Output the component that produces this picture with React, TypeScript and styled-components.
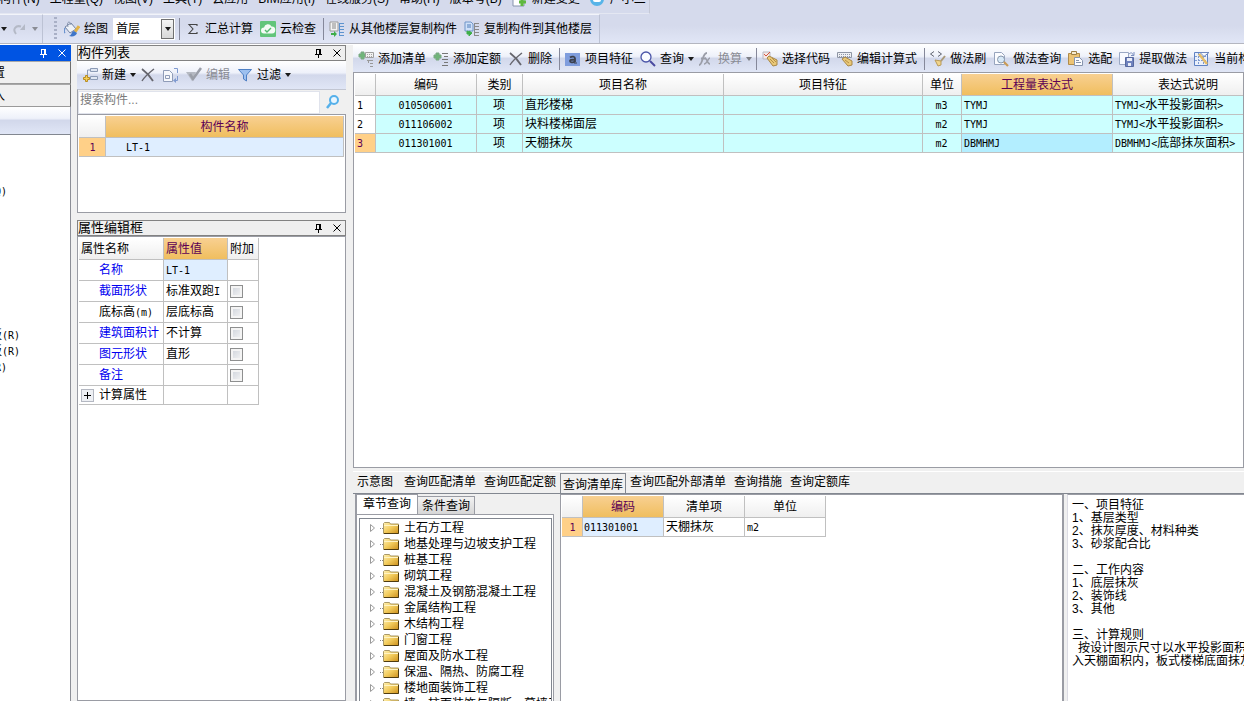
import React from 'react';
import styled, { createGlobalStyle, css } from 'styled-components';

const GlobalStyle = createGlobalStyle`
  *, *::before, *::after { box-sizing: border-box; }
  html, body { margin: 0; padding: 0; }
  body, button, input, select, th, td {
    font-family: "Liberation Sans", "Noto Sans CJK SC", sans-serif;
    font-size: 12px;
    line-height: 16px;
    color: #000;
  }
  body { overflow: hidden; background: #f0f0f0; }
  button { margin: 0; padding: 0; border: 0; background: none; white-space: nowrap; }
`;

const barGradient = css`
  background: linear-gradient(#ffffff 0%, #eef1fa 42%, #d2d8eb 50%, #e0e6f6 100%);
`;

/* ---------- window ---------- */

const Window = styled.div`
  display: flex;
  flex-direction: column;
  height: 100vh;
  background: #f0f0f0;
`;

const TopArea = styled.header`
  flex: none;
  background: linear-gradient(#d5daec 60%, #e1e6f6);
  border-bottom: 1px solid #b4b6c0;
`;

const MenuBar = styled.nav`
  display: flex;
  align-items: flex-end;
  gap: 10px;
  width: 650px;
  height: 14px;
  padding-bottom: 6px;
  overflow: hidden;
  border-right: 1px solid #c4c8d6;
  border-bottom: 1px solid #e4e7f2;
`;

const MenuItem = styled.button`
  flex: none;
  display: flex;
  gap: 4px;
  &:first-child { margin-left: -1px; }
`;

const TopToolbars = styled.div`
  display: flex;
  height: 29px;
`;

const BarGroup = styled.div`
  display: flex;
  align-items: center;
  border-right: 1px solid #bcc2d4;
  border-top: 1px solid #f2f4fa;
`;

const Grip = styled.span`
  width: 3px;
  height: 24px;
  margin: 0 7px 0 11px;
  background: repeating-linear-gradient(#a9b0c6 0 2px, transparent 2px 4px);
`;

const ToolButton = styled.button<{ $tight?: boolean }>`
  flex: none;
  display: flex;
  align-items: center;
  gap: 4px;
  padding-right: ${(p) => (p.$tight ? '4px' : '7px')};
  &:disabled { color: #8a8c94; }
`;

const Separator = styled.span`
  flex: none;
  width: 1px;
  height: 22px;
  margin-right: 5px;
  background: #85889a;
`;

const FloorPicker = styled.label`
  position: relative;
  display: block;
  width: 62px;
  height: 22px;
  margin: 0 4px 0 -2px;
  border: 1px solid #fff;
  background: #fff;
  select {
    width: 100%;
    height: 20px;
    padding: 0 18px 0 2px;
    border: 0;
    background: transparent;
    appearance: none;
  }
`;

const PickerArrow = styled.span`
  position: absolute;
  right: 0;
  top: 0;
  display: flex;
  align-items: center;
  justify-content: center;
  width: 13px;
  height: 20px;
  border: 1px solid #707070;
  background: linear-gradient(#f5f5f5, #d8d8d8);
  pointer-events: none;
`;

/* ---------- work space ---------- */

const Workspace = styled.div`
  flex: 1;
  min-height: 0;
  display: grid;
  grid-template-columns: 71px 269px minmax(0, 1fr);
  gap: 0 6px;
  border-top: 1px solid #fff;
`;

const Dock = styled.section<{ $inset?: boolean }>`
  display: flex;
  flex-direction: column;
  min-width: 0;
  min-height: 0;
  padding-left: ${(p) => (p.$inset ? '1px' : '0')};
`;

const DockTitle = styled.div<{ $active?: boolean }>`
  flex: none;
  display: flex;
  align-items: center;
  gap: 11px;
  height: 16px;
  padding-right: 4px;
  font-size: 13px;
  white-space: nowrap;
  color: ${(p) => (p.$active ? '#fff' : '#000')};
  background: ${(p) => (p.$active ? '#0054e3' : '#efefef')};
  border: 1px solid ${(p) => (p.$active ? '#0054e3' : '#828282')};
  border-left-width: ${(p) => (p.$active ? '0' : '1px')};
  button { color: inherit; display: flex; }
  span { flex: 1; }
`;

const NavButton = styled.button`
  height: 23px;
  text-align: left;
  text-indent: -7px;
  overflow: hidden;
  background: #f0f0f0;
  border-top: 1px solid #a8a8a8;
  border-right: 1px solid #6e6e6e;
  border-bottom: 1px solid #9a9a9a;
`;

const NavBar = styled.div`
  height: 27px;
  ${barGradient}
  border-right: 1px solid #a0a4b4;
`;

const NavTree = styled.ul`
  flex: 1;
  display: flex;
  flex-direction: column;
  margin: 0;
  padding: 48px 0 0;
  list-style: none;
  overflow: hidden;
  background: #fff;
  border-top: 1px solid #828790;
  border-right: 1px solid #8c8e96;
`;

const NavNode = styled.li<{ $gap?: boolean; $out: number }>`
  height: 16px;
  margin-top: ${(p) => (p.$gap ? '128px' : '0')};
  text-indent: -${(p) => p.$out}px;
  white-space: nowrap;
`;

const Mono = styled.span`
  font-family: "DejaVu Sans Mono", monospace;
  font-size: 10px;
`;

const ToolStrip = styled.div<{ $h: number; $left: number }>`
  flex: none;
  display: flex;
  align-items: center;
  height: ${(p) => p.$h}px;
  padding-left: ${(p) => p.$left}px;
  overflow: hidden;
  ${barGradient}
`;

const SearchRow = styled.form`
  flex: none;
  display: flex;
  align-items: center;
  height: 25px;
  border-left: 1px solid #a0a2aa;
  border-top: 1px solid #c2c6d2;
  input {
    flex: 1;
    min-width: 0;
    height: 23px;
    padding: 0 1px 4px;
    border: 1px solid #e0e3ec;
    background: #fff;
    outline: 0;
  }
  input::placeholder { color: #7b7b7b; opacity: 1; }
  button { display: flex; padding: 0 5px; }
`;

const Pane = styled.div<{ $h?: number; $gap?: number }>`
  flex: ${(p) => (p.$h ? 'none' : '1')};
  min-height: 0;
  height: ${(p) => (p.$h ? p.$h + 'px' : 'auto')};
  margin-bottom: ${(p) => p.$gap || 0}px;
  padding: 1px;
  overflow: hidden;
  background: #fff;
  border: 1px solid #9a9ca4;
`;

/* ---------- tables ---------- */

const Grid = styled.table<{ $w?: string }>`
  table-layout: fixed;
  width: ${(p) => p.$w || '100%'};
  border-spacing: 0;
  border-collapse: separate;
`;

const Head = styled.th<{ $hot?: boolean; $left?: boolean }>`
  height: 22px;
  padding: 0 2px;
  font-weight: normal;
  text-align: ${(p) => (p.$left ? 'left' : 'center')};
  white-space: nowrap;
  color: ${(p) => (p.$hot ? '#5c0055' : '#000')};
  background: ${(p) => (p.$hot ? 'linear-gradient(#f8d092, #f0be5e)' : 'linear-gradient(#ffffff, #efefef)')};
  border-right: 1px solid #c0c0c0;
  border-bottom: 1px solid #c0c0c0;
`;

const tones = {
  plain: '#ffffff',
  aqua: '#ccffff',
  picked: '#b3eeff',
  soft: '#dfeeff',
  marker: '#ffd088',
};

const Cell = styled.td<{ $tone?: keyof typeof tones; $center?: boolean; $h?: number; $indent?: number; $blue?: boolean }>`
  height: ${(p) => p.$h || 19}px;
  padding: 0 1px 0 ${(p) => p.$indent ?? 2}px;
  line-height: 16px;
  overflow: hidden;
  white-space: nowrap;
  text-align: ${(p) => (p.$center ? 'center' : 'left')};
  color: ${(p) => (p.$blue ? '#0000f0' : p.$tone === 'marker' ? '#5c0055' : '#000')};
  background: ${(p) => tones[p.$tone || 'plain']};
  border-right: 1px solid #c0c0c0;
  border-bottom: 1px solid #c0c0c0;
`;

const Tick = styled.input`
  display: block;
  width: 13px;
  height: 13px;
  margin: 0;
  appearance: none;
  border: 1px solid #8e8f8f;
  background: linear-gradient(135deg, #cdd2da, #f6f6f6);
  box-shadow: inset 0 0 0 2px #f4f4f4;
`;

const Expander = styled.button`
  display: inline-flex;
  align-items: center;
  justify-content: center;
  width: 13px;
  height: 13px;
  margin: 0 5px 0 2px;
  vertical-align: middle;
  border: 1px solid #b4b8c2;
  background: #eef0f4;
`;

/* ---------- query area ---------- */

const QueryTabs = styled.div`
  flex: none;
  display: flex;
  height: 23px;
  margin-top: 3px;
  border-top: 1px solid #fff;
  border-bottom: 1px solid #828790;
`;

const QueryTab = styled.button<{ $on?: boolean }>`
  flex: none;
  height: ${(p) => (p.$on ? '20px' : '19px')};
  margin-top: ${(p) => (p.$on ? '1px' : '0')};
  padding: ${(p) => (p.$on ? '2px 2px 0' : '1px 4px 0')};
  border: ${(p) => (p.$on ? '1px solid #828790' : '0')};
  border-bottom: 0;
  &:first-child { min-width: 47px; padding-right: 7px; }
`;

const QueryBody = styled.div`
  flex: none;
  display: grid;
  grid-template-columns: 207px minmax(0, 1fr) 180px;
  height: 207px;
`;

const ChapterBox = styled.div`
  display: flex;
  flex-direction: column;
  min-height: 0;
  margin-left: 2px;
`;

const ChapterTabs = styled.div`
  flex: none;
  display: flex;
  align-items: flex-end;
  height: 20px;
`;

const ChapterTab = styled.button<{ $on?: boolean }>`
  height: ${(p) => (p.$on ? '20px' : '18px')};
  width: ${(p) => (p.$on ? '63px' : '57px')};
  padding-bottom: ${(p) => (p.$on ? '2px' : '0')};
  border: 1px solid #9a9ca4;
  border-left-width: ${(p) => (p.$on ? '2px' : '0')};
  border-bottom: 0;
  background: ${(p) => (p.$on ? '#fff' : 'linear-gradient(#f2f2f2, #d6d6d6)')};
`;

const ChapterPane = styled.div`
  flex: 1;
  min-height: 0;
  display: flex;
  margin-right: 6px;
  padding: 3px 1px 0 2px;
  background: #fff;
  border: 1px solid #9a9ca4;
  border-left-width: 2px;
  border-bottom: 0;
`;

const Tree = styled.ul`
  flex: 1;
  min-width: 0;
  margin: 0;
  padding: 1px 0 0 10px;
  overflow: hidden;
  list-style: none;
  border: 1px solid #828790;
  border-bottom: 0;
`;

const TreeNode = styled.li`
  display: flex;
  align-items: center;
  height: 16px;
  white-space: nowrap;
  svg { flex: none; margin-right: 5px; }
`;

const ResultPane = styled.div`
  min-width: 0;
  overflow: hidden;
  padding: 1px 1px 0;
  background: #fff;
  border: 1px solid #9a9ca4;
  border-right-width: 2px;
  border-bottom: 0;
`;

const NotePane = styled.div`
  margin-left: 3px;
  padding: 4px 0 0 4px;
  overflow: hidden;
  white-space: pre;
  line-height: 13px;
  background: #fff;
  border-top: 1px solid #9a9ca4;
  border-left: 1px solid #dcdce4;
`;

const NoteLine = styled.p<{ $indent?: boolean }>`
  margin: 0;
  min-height: 13px;
  padding-left: ${(p) => (p.$indent ? '6px' : '0')};
`;

/* ---------- icons ---------- */

const Svg = ({ children, w = 16, h = 16 }: { children: React.ReactNode; w?: number; h?: number }) => (
  <svg width={w} height={h} viewBox={`0 0 ${w} ${h}`} fill="none" aria-hidden="true">{children}</svg>
);

const Caret = ({ color = '#1a1a1a' }: { color?: string }) => (
  <Svg w={6} h={4}><path d="M0 0h6L3 4z" fill={color} /></Svg>
);

const icons: Record<string, React.ReactNode> = {
  redo: <><path d="M4 13C0 8 4 4 9 5.500" stroke="#b4b9c6" strokeWidth="2" /><path d="M8 9l5 0V3z" fill="#b4b9c6" /></>,
  bucket: <>
    <path d="M1 6l6-4 5 6-6 4z" fill="#eef2f8" stroke="#7484a4" />
    <path d="M4 6C2 1 6-1 7 4" stroke="#8794ae" />
    <path d="M1 7c-1 2-1 4 0 5" stroke="#6b93cf" strokeWidth="1.500" />
    <path d="M15 5l-4 6" stroke="#e3b347" strokeWidth="3" />
    <path d="M10 10l3 2c-1 3-4 4-8 3 3-1 2-4 5-5z" fill="#3f76c8" />
  </>,
  sigma: <path d="M12 5V3.500H4L8 8l-4 4.500h8V11" stroke="#444" strokeWidth="1.100" />,
  cloud: <>
    <rect width="16" height="16" rx="1" fill="#62c57a" />
    <path d="M4 12.500a3 3 0 010-6 4 4 0 017.500-1A3.500 3.500 0 0112 12.500z" fill="#f4fbf5" />
    <path d="M5 9l2 2 4-4" stroke="#54b96e" strokeWidth="1.400" />
  </>,
  copyFrom: <>
    <path d="M1 1h8v9H1z" fill="#f4f4f4" stroke="#9a9a9a" />
    <path d="M3 3h4M3 5h4M3 7h4" stroke="#888" />
    <path d="M11 2.500h4M11 5.500h4M11 8.500h4M11 11.500h4M11 14.500h4M10.500 2v13" stroke="#5d93cf" />
    <path d="M2 12h3v-2l3 3-3 3v-2H2z" fill="#3fae49" />
  </>,
  copyTo: <>
    <path d="M1 1h6l2 2v7H1z" fill="#cfe0f8" stroke="#6f95c8" />
    <path d="M3 4h4M3 6h4" stroke="#4e7cb8" />
    <path d="M11 2.500h4M11 5.500h4M11 8.500h4M11 11.500h4M11 14.500h4M10.500 2v13" stroke="#8a8a8a" />
    <path d="M3 10v3h2v2l3-3-3-2v1z" fill="#3fae49" stroke="#3fae49" />
  </>,
  add: <>
    <path d="M8.500 1.500h7v3h-7zM8.500 9.500h7v3h-7z" fill="#dfe6f2" stroke="#8b9ab5" />
    <path d="M8 3H5.500v8H8" stroke="#8b9ab5" />
    <path d="M3.500 8.500h2v2h2v2h-2v2h-2v-2h-2v-2h2z" fill="#f6cf54" stroke="#b98d22" />
  </>,
  cross: <><path d="M2 2c4 3 8 7 11 12" stroke="#66666e" strokeWidth="1.800" /><path d="M14 2C9 6 5 9 2 14" stroke="#66666e" strokeWidth="1.400" /></>,
  copy: <>
    <path d="M.5 3.500h6l3 3v8h-9z" fill="#f6f8fc" stroke="#8f9cb8" />
    <path d="M2.500 8.500h4v3h-4z" stroke="#8f9cb8" />
    <path d="M11 1.500h3.500V6M12 13.500h2.500V9" stroke="#7f9ad0" /><path d="M10 13.500l3-2.500v5z" fill="#7f9ad0" />
  </>,
  check: <><path d="M0 5h10l-4 9z" fill="#b5b9c2" /><path d="M4 7l3 5 8-11" stroke="#9a9ea8" strokeWidth="2.500" /></>,
  filter: <path d="M1.500 2.500h13L9.500 8v6l-3-2V8z" fill="#9dc0ef" stroke="#4d7fc4" />,
  addList: <>
    <path d="M3 1h3v2h2v3H6v2H3V6H1V3h2z" fill="#6fb57a" stroke="#7aa884" />
    <path d="M7.500 1.500h8v5h-8z" fill="#f2f2f2" stroke="#a0a0a0" />
    <path d="M9 3.500h6M9 5.500h6" stroke="#a5a5a5" strokeDasharray="1 1" />
    <path d="M9 9.500h6M12 12.500h3M12 15.500h3M10.500 9v3" stroke="#999" />
  </>,
  addQuota: <>
    <path d="M3 2h3v2h2v3H6v2H3V7H1V4h2z" fill="#6fb57a" stroke="#7aa884" />
    <path d="M9 2.500h6M11 5.500h4M9 8.500h6M11 11.500h4M9 14.500h6" stroke="#777" />
  </>,
  feature: <>
    <rect x="0" y="2" width="15" height="13" fill="#7f9ddd" />
    <path d="M5 6.500c2-1.500 5-1 5 1V11M10 8.500c-3 0-5 0-5 1.500s3 2 5 .5" stroke="#3a3f4c" strokeWidth="1.800" />
    <path d="M9 12h3" stroke="#3a3f4c" />
  </>,
  search: <><circle cx="6" cy="6" r="5" fill="#fafcff" stroke="#4a55a8" strokeWidth="1.300" /><path d="M10 10l5 5" stroke="#4a4aa0" strokeWidth="2" /></>,
  fx: <><path d="M1 14c4 0 3-12 8-12M3 7.500h5" stroke="#9a9da7" strokeWidth="1.800" /><path d="M7 7c2 0 2 6 5 6M12 7c-2 0-3 6-6 6" stroke="#9a9da7" strokeWidth="1.500" /></>,
  pickCode: <>
    <path d="M1 1h7v7H1z" fill="#f6e8e4" stroke="#b9b9c2" />
    <path d="M2 3l2 2 4-4" stroke="#d3543d" />
    <path d="M5 7l2-2 8 4 0 5-4 1z" fill="#e9c878" stroke="#a98744" />
    <path d="M8 8l4 4M10 7l4 4" stroke="#b58f47" />
  </>,
  editFormula: <>
    <path d="M.5 1.500h14v5H.5z" fill="#eef0f4" stroke="#8f96a5" />
    <path d="M2 3.500h12M2 5.500h12" stroke="#8f96a5" strokeDasharray="1 1" />
    <path d="M5 8l3-2 7 4v4l-4 1z" fill="#e9c878" stroke="#a98744" />
    <path d="M8 9l4 3" stroke="#b58f47" />
  </>,
  brush: <>
    <path d="M4 .5L.5 3 4 5.500M8 .5L11.500 3 8 5.500" stroke="#5f6470" />
    <path d="M15 5l-4 5" stroke="#a99a78" strokeWidth="2" />
    <path d="M5 9l6 1 0 4-3 1z" fill="#f0d48c" stroke="#b99a58" />
  </>,
  docSearch: <>
    <path d="M1.500 1.500h7l3 3v9h-10z" fill="#fbfcff" stroke="#97a4bd" />
    <circle cx="8" cy="8.500" r="3.500" fill="#d7e9f7" stroke="#8796ab" />
    <path d="M11 11l4 4" stroke="#c99a55" strokeWidth="2.200" />
  </>,
  paste: <>
    <path d="M.5 2.500h11v11H.5z" fill="#ecc374" stroke="#b08c4a" />
    <path d="M3.500.5h5v3h-5z" fill="#f8ecd0" stroke="#9d7f46" />
    <path d="M6.500 6.500h5l3 3v5h-8z" fill="#fbfcff" stroke="#8794ad" /><path d="M8 9.500h3M8 11.500h5" stroke="#8794ad" />
  </>,
  extract: <>
    <path d="M.5 1.500h9v12h-9z" fill="#f8faff" stroke="#9aa8c4" />
    <path d="M6.500 6.500h8v9h-8z" fill="#6f82be" stroke="#56689f" /><path d="M8 7h5v3H8zM9 12h3v3H9z" fill="#e9edf8" />
    <path d="M10 3c2-2 4-1 4 1M12 4.500h3V1" stroke="#7b8fc0" />
  </>,
  current: <>
    <path d="M.5 1.500h13v13H.5z" fill="#eaf0fb" stroke="#5f82c4" />
    <path d="M1 5.500h12M1 9.500h12M4.500 2v12M9.500 2v12" stroke="#7e9ad0" strokeDasharray="2 1" />
    <path d="M5 3l8 10" stroke="#e5bc66" strokeWidth="2.500" /><path d="M15 1.500H6l4 4z" stroke="#6f88bd" fill="#f7f9fe" />
  </>,
  docPlus: <><path d="M1 1h9l2 2v12H1z" fill="#fff" stroke="#8794ad" /><path d="M10 8v7M7 11h7" stroke="#5fb83f" strokeWidth="3" /></>,
  mascot: <><circle cx="7" cy="8" r="7" fill="#57b4e8" /><rect x="3" y="6" width="8" height="5" rx="2" fill="#fff" /></>,
};

const Icon = ({ name }: { name: string }) => <Svg>{icons[name]}</Svg>;

const PinIcon = () => (
  <Svg w={7} h={9}><path d="M1 .5h5M1.500 .5V5M4.500 .5V5M5.500 .5V5M0 5.500h7M3.500 5.500V9" stroke="currentColor" /></Svg>
);
const CloseIcon = () => (
  <Svg w={8} h={8}><path d="M.5 .5l7 7M7.500 .5l-7 7" stroke="currentColor" /></Svg>
);

const FolderIcon = () => (
  <Svg w={29} h={14}>
    <defs>
      <linearGradient id="folder" x1="0" y1="0" x2="1" y2="1">
        <stop offset="0" stopColor="#fff0b0" /><stop offset="0.500" stopColor="#f2cb5c" /><stop offset="1" stopColor="#cc8f1c" />
      </linearGradient>
    </defs>
    <path d="M.5 3.500v7L4.500 7z" stroke="#9a9a9a" fill="#fff" />
    <path d="M10 7.500h3" stroke="#888" strokeDasharray="1 1" />
    <path d="M13.500 12.500v-10l1-1h5l1 1.500h8v9.500z" fill="url(#folder)" stroke="#a89868" />
    <path d="M14 12.500h14.500V4" stroke="#4f3c10" />
    <path d="M14 4.500h14" stroke="#fff4c4" />
  </Svg>
);

/* ---------- pieces ---------- */

type ToolProps = { icon: string; label?: string; name?: string; menu?: boolean; off?: boolean };
const Tool = ({ icon, label, name, menu, off }: ToolProps) => (
  <ToolButton type="button" disabled={off} $tight={menu} aria-label={label ? undefined : name}>
    <Icon name={icon} />
    {label}
    {menu && <Caret color={off ? '#7d7f86' : undefined} />}
  </ToolButton>
);

const Title = ({ text, active }: { text?: string; active?: boolean }) => (
  <DockTitle $active={active}>
    <span>{text}</span>
    <button type="button" aria-label="固定"><PinIcon /></button>
    <button type="button" aria-label="关闭"><CloseIcon /></button>
  </DockTitle>
);

const menus = ['构件(N)', '工程量(Q)', '视图(V)', '工具(T)', '云应用', 'BIM应用(I)', '在线服务(S)', '帮助(H)', '版本号(B)'];

const items = [
  { code: '010506001', name: '直形楼梯', unit: 'm3', expr: 'TYMJ', note: '水平投影面积' },
  { code: '011106002', name: '块料楼梯面层', unit: 'm2', expr: 'TYMJ', note: '水平投影面积' },
  { code: '011301001', name: '天棚抹灰', unit: 'm2', expr: 'DBMHMJ', note: '底部抹灰面积' },
];

const properties: { name: string; mono?: string; value: string; tail?: string; blue?: boolean }[] = [
  { name: '截面形状', value: '标准双跑', tail: 'I', blue: true },
  { name: '底标高', mono: '(m)', value: '层底标高' },
  { name: '建筑面积计', value: '不计算', blue: true },
  { name: '图元形状', value: '直形', blue: true },
  { name: '备注', value: '', blue: true },
];

const queryTabs = ['示意图', '查询匹配清单', '查询匹配定额', '查询清单库', '查询匹配外部清单', '查询措施', '查询定额库'];

const chapters = [
  '土石方工程', '地基处理与边坡支护工程', '桩基工程', '砌筑工程', '混凝土及钢筋混凝土工程', '金属结构工程',
  '木结构工程', '门窗工程', '屋面及防水工程', '保温、隔热、防腐工程', '楼地面装饰工程', '墙、柱面装饰与隔断、幕墙工程',
];

const notes = [
  '一、项目特征', '1、基层类型', '2、抹灰厚度、材料种类', '3、砂浆配合比', '',
  '二、工作内容', '1、底层抹灰', '2、装饰线', '3、其他', '',
  '三、计算规则', '按设计图示尺寸以水平投影面积', '入天棚面积内，板式楼梯底面抹灰',
];

export default function App() {
  return (
    <Window>
      <GlobalStyle />
      <TopArea>
        <MenuBar>
          {menus.map((m) => <MenuItem type="button" key={m}>{m}</MenuItem>)}
          <MenuItem type="button"><Icon name="docPlus" />新建变更</MenuItem>
          <MenuItem type="button"><Icon name="mascot" />广小二</MenuItem>
        </MenuBar>
        <TopToolbars>
          <BarGroup>
            <ToolButton type="button" $tight aria-label="撤销"><Svg w={8} h={4}><path d="M1 0h6L4 4z" fill="#1a1a1a" /></Svg></ToolButton>
            <ToolButton type="button" $tight disabled aria-label="恢复"><Icon name="redo" /><Caret color="#8a8c94" /></ToolButton>
          </BarGroup>
          <BarGroup>
            <Grip />
            <Tool icon="bucket" label="绘图" />
            <FloorPicker>
              <select aria-label="楼层" defaultValue="首层"><option>首层</option></select>
              <PickerArrow><Caret /></PickerArrow>
            </FloorPicker>
            <Separator />
            <Tool icon="sigma" label="汇总计算" />
            <Tool icon="cloud" label="云检查" />
            <Separator />
            <Tool icon="copyFrom" label="从其他楼层复制构件" />
            <Tool icon="copyTo" label="复制构件到其他楼层" />
          </BarGroup>
        </TopToolbars>
      </TopArea>

      <Workspace>
        <Dock>
          <Title active />
          <NavButton type="button">置</NavButton>
          <NavButton type="button">入</NavButton>
          <NavBar />
          <NavTree>
            <NavNode $out={5}><Mono>Q)</Mono></NavNode>
            <NavNode $out={10} $gap>板<Mono>(R)</Mono></NavNode>
            <NavNode $out={10}>板<Mono>(R)</Mono></NavNode>
            <NavNode $out={5}><Mono>R)</Mono></NavNode>
          </NavTree>
        </Dock>

        <Dock>
          <Title text="构件列表" />
          <ToolStrip $h={28} $left={5}>
            <Tool icon="add" label="新建" menu />
            <Tool icon="cross" name="删除" />
            <Tool icon="copy" name="复制" />
            <Tool icon="check" label="编辑" off />
            <Tool icon="filter" label="过滤" menu />
          </ToolStrip>
          <SearchRow onSubmit={(e) => e.preventDefault()}>
            <input type="text" placeholder="搜索构件..." aria-label="搜索构件" />
            <button type="submit" aria-label="搜索">
              <Svg><circle cx="9" cy="6" r="4" fill="#e9f6ff" stroke="#55b0ea" strokeWidth="2" /><path d="M6 9l-4 5" stroke="#55b0ea" strokeWidth="2.500" /></Svg>
            </button>
          </SearchRow>
          <Pane $h={99} $gap={7}>
            <Grid>
              <colgroup><col width={27} /><col /></colgroup>
              <thead><tr><Head /><Head $hot>构件名称</Head></tr></thead>
              <tbody><tr><Cell $tone="marker" $center><Mono>1</Mono></Cell><Cell $tone="soft" $indent={20}><Mono>LT-1</Mono></Cell></tr></tbody>
            </Grid>
          </Pane>
          <Title text="属性编辑框" />
          <Pane>
            <Grid $w="180px">
              <colgroup><col width={85} /><col width={64} /><col width={31} /></colgroup>
              <thead><tr><Head $left>属性名称</Head><Head $left $hot>属性值</Head><Head $left>附加</Head></tr></thead>
              <tbody>
                <tr><Cell $h={21} $indent={20} $blue>名称</Cell><Cell $h={21} $tone="soft"><Mono>LT-1</Mono></Cell><Cell /></tr>
                {properties.map((p) => (
                  <tr key={p.name}>
                    <Cell $h={21} $indent={20} $blue={p.blue}>{p.name}{p.mono && <Mono>{p.mono}</Mono>}</Cell>
                    <Cell $h={21}>{p.value}{p.tail && <Mono>{p.tail}</Mono>}</Cell>
                    <Cell $h={21}><Tick type="checkbox" aria-label={p.name + '附加'} /></Cell>
                  </tr>
                ))}
                <tr>
                  <Cell $indent={0}>
                    <Expander type="button" aria-label="展开"><Svg w={7} h={7}><path d="M0 3.500h7M3.500 0v7" stroke="#000" /></Svg></Expander>计算属性
                  </Cell>
                  <Cell /><Cell />
                </tr>
              </tbody>
            </Grid>
          </Pane>
        </Dock>

        <Dock $inset>
          <ToolStrip $h={27} $left={5}>
            <Tool icon="addList" label="添加清单" />
            <Tool icon="addQuota" label="添加定额" />
            <Tool icon="cross" label="删除" />
            <Separator />
            <Tool icon="feature" label="项目特征" />
            <Tool icon="search" label="查询" menu />
            <Tool icon="fx" label="换算" menu off />
            <Separator />
            <Tool icon="pickCode" label="选择代码" />
            <Tool icon="editFormula" label="编辑计算式" />
            <Separator />
            <Tool icon="brush" label="做法刷" />
            <Tool icon="docSearch" label="做法查询" />
            <Tool icon="paste" label="选配" />
            <Tool icon="extract" label="提取做法" />
            <Tool icon="current" label="当前构件" />
          </ToolStrip>
          <Pane>
            <Grid $w="909px">
              <colgroup>
                <col width={21} /><col width={101} /><col width={46} /><col width={201} /><col width={199} />
                <col width={39} /><col width={151} /><col width={151} />
              </colgroup>
              <thead>
                <tr>
                  <Head /><Head>编码</Head><Head>类别</Head><Head>项目名称</Head><Head>项目特征</Head><Head>单位</Head>
                  <Head $hot>工程量表达式</Head><Head>表达式说明</Head>
                </tr>
              </thead>
              <tbody>
                {items.map((r, i) => (
                  <tr key={r.code}>
                    <Cell $tone={i === 2 ? 'marker' : 'plain'}><Mono>{i + 1}</Mono></Cell>
                    <Cell $tone="aqua" $center $indent={0}><Mono>{r.code}</Mono></Cell>
                    <Cell $tone="aqua" $center $indent={0}>项</Cell>
                    <Cell $tone="aqua">{r.name}</Cell>
                    <Cell $tone="aqua" />
                    <Cell $tone="aqua" $center $indent={0}><Mono>{r.unit}</Mono></Cell>
                    <Cell $tone={i === 2 ? 'picked' : 'aqua'}><Mono>{r.expr}</Mono></Cell>
                    <Cell $tone="aqua"><Mono>{r.expr}&lt;</Mono>{r.note}<Mono>&gt;</Mono></Cell>
                  </tr>
                ))}
              </tbody>
            </Grid>
          </Pane>
          <QueryTabs role="tablist">
            {queryTabs.map((t, i) => (
              <QueryTab type="button" role="tab" key={t} $on={i === 3} aria-selected={i === 3}>{t}</QueryTab>
            ))}
          </QueryTabs>
          <QueryBody>
            <ChapterBox>
              <ChapterTabs role="tablist">
                <ChapterTab type="button" role="tab" $on aria-selected>章节查询</ChapterTab>
                <ChapterTab type="button" role="tab" aria-selected={false}>条件查询</ChapterTab>
              </ChapterTabs>
              <ChapterPane>
                <Tree>
                  {chapters.map((c) => <TreeNode key={c}><FolderIcon />{c}</TreeNode>)}
                </Tree>
              </ChapterPane>
            </ChapterBox>
            <ResultPane>
              <Grid $w="264px">
                <colgroup><col width={21} /><col width={81} /><col width={81} /><col width={81} /></colgroup>
                <thead><tr><Head /><Head $hot>编码</Head><Head>清单项</Head><Head>单位</Head></tr></thead>
                <tbody>
                  <tr>
                    <Cell $tone="marker" $center><Mono>1</Mono></Cell>
                    <Cell $tone="soft" $indent={1}><Mono>011301001</Mono></Cell>
                    <Cell>天棚抹灰</Cell>
                    <Cell><Mono>m2</Mono></Cell>
                  </tr>
                </tbody>
              </Grid>
            </ResultPane>
            <NotePane>
              {notes.map((n, i) => <NoteLine key={i} $indent={i === 11}>{n}</NoteLine>)}
            </NotePane>
          </QueryBody>
        </Dock>
      </Workspace>
    </Window>
  );
}
